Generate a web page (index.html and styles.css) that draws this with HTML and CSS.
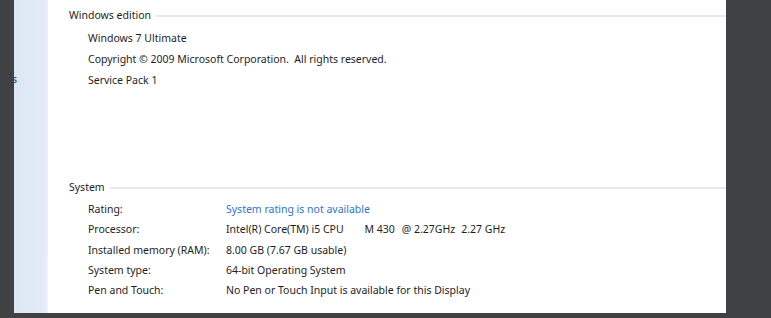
FILE: index.html
```html
<!DOCTYPE html>
<html lang="en">
<head>
  <meta charset="UTF-8">
  <title>System</title>
  <link rel="stylesheet" href="styles.css">
</head>
<body>
  <div class="frame">
    <div class="edge"></div>
    <div class="sidebar">
      <span class="side-link">s</span>
    </div>
    <div class="main">
      <div class="group edition">
        <div class="group-title">Windows edition</div>
        <div class="line">Windows 7 Ultimate</div>
        <div class="line">Copyright © 2009 Microsoft Corporation.  All rights reserved.</div>
        <div class="line">Service Pack 1</div>
      </div>

      <div class="group system">
        <div class="group-title">System</div>
        <div class="row"><span class="label">Rating:</span><span class="value link">System rating is not available</span></div>
        <div class="row">
          <span class="label">Processor:</span>
          <span class="value">Intel(R) Core(TM) i5 CPU<span class="cpu-model">M 430</span><span class="cpu-clock">@ 2.27GHz</span><span class="cpu-speed">2.27 GHz</span></span>
        </div>
        <div class="row"><span class="label">Installed memory (RAM):</span><span class="value">8.00 GB (7.67 GB usable)</span></div>
        <div class="row"><span class="label">System type:</span><span class="value">64-bit Operating System</span></div>
        <div class="row"><span class="label">Pen and Touch:</span><span class="value">No Pen or Touch Input is available for this Display</span></div>
      </div>
    </div>
  </div>
</body>
</html>
```

FILE: styles.css
```css
body {
  margin: 0;
  height: 318px;
  overflow: hidden;
  background-color: #404143;
  font-family: 'Noto Sans', 'Open Sans', Arial, sans-serif;
  font-size: 10.5px;
  color: #1e1e1e;
}

.frame {
  display: flex;
  height: 313px;
}

.edge {
  width: 14px;
  background-color: #404143;
}

.sidebar {
  width: 34px;
  background: linear-gradient(to right, #dde7f4, #e2ebf7 90%, #edf2fa);
  position: relative;
}

.side-link {
  position: absolute;
  left: -2px;
  top: 72px;
  color: #233a8e;
}

.main {
  width: 678px;
  background-color: #ffffff;
  display: flex;
  flex-direction: column;
}

.group-title {
  display: flex;
  align-items: center;
  padding-left: 21px;
  height: 21px;
  white-space: nowrap;
}

.group-title::after {
  content: '';
  flex: 1;
  height: 2px;
  margin-left: 5px;
  margin-top: 2px;
  background-color: #e8e8e8;
}

.edition {
  padding-top: 4px;
}

.edition .group-title {
  margin-bottom: 3px;
}

.line {
  padding-left: 40px;
  height: 21px;
  line-height: 21px;
  white-space: pre;
}

.system {
  margin-top: 85px;
}

.row {
  display: flex;
  padding-left: 40px;
  height: 20.3px;
  line-height: 20.3px;
}

.system .group-title {
  margin-bottom: 2px;
}

.label {
  width: 138px;
  flex-shrink: 0;
  white-space: nowrap;
}

.value {
  white-space: pre;
}

.cpu-model {
  margin-left: 21px;
}

.cpu-clock {
  margin-left: 7px;
}

.cpu-speed {
  margin-left: 6px;
}

.link {
  color: #2e74cf;
}
```
